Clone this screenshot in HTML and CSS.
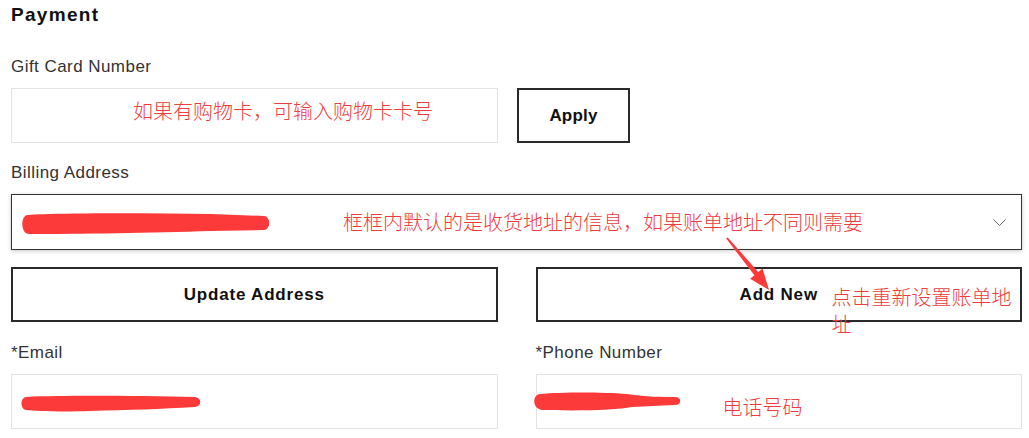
FILE: index.html
```html
<!DOCTYPE html>
<html lang="zh-CN">
<head>
<meta charset="utf-8">
<title>Payment</title>
<link rel="stylesheet" href="styles.css">
</head>
<body>
<div class="page">
  <h2 class="title">Payment</h2>

  <div class="group group-gift">
    <div class="label">Gift Card Number</div>
    <div class="gift-row">
      <div class="input gift-input">
        <span class="note">如果有购物卡，可输入购物卡卡号</span>
      </div>
      <button class="btn btn-apply">Apply</button>
    </div>
  </div>

  <div class="group group-billing">
    <div class="label">Billing Address</div>
    <div class="select">
      <svg class="scribble" width="250" height="22" viewBox="0 0 250 22"><path d="M6,2 C40,0 120,0 190,1 L243,3 C250,4 250,16 243,17 L190,18 C130,20 60,21 8,21 C0,21 -1,4 6,2 Z" fill="#fd3a3a"/></svg>
      <span class="note note-billing">框框内默认的是收货地址的信息，如果账单地址不同则需要</span>
      <svg class="chevron" width="13" height="7" viewBox="0 0 13 7"><polyline points="0.5,0.5 6.5,6.5 12.5,0.5" fill="none" stroke="#666" stroke-width="1"/></svg>
    </div>
  </div>

  <div class="two-col btn-row">
    <button class="btn">Update Address</button>
    <div class="btn-wrap">
      <button class="btn">Add New</button>
      <span class="note note-add">点击重新设置账单地址</span>
    </div>
  </div>

  <div class="two-col contact-row">
    <div class="group">
      <div class="label">*Email</div>
      <div class="input email-input">
        <svg class="scribble" width="181" height="17" viewBox="0 0 181 17"><path d="M6,2 C50,0 120,1 175,2 C182,3 182,11 175,12 C140,14 110,15 70,16 C40,17 15,16 6,15 C0,14 0,3 6,2 Z" fill="#fd3a3a"/></svg>
      </div>
    </div>
    <div class="group">
      <div class="label">*Phone Number</div>
      <div class="input phone-input">
        <svg class="scribble scribble-phone" width="149" height="19" viewBox="0 0 149 19"><path d="M8,2 C30,0 70,0 95,2 C115,5 130,5 143,5 C150,5 150,13 143,13 C125,14 115,14 100,15 C85,18 50,19 10,18 C0,17 0,3 8,2 Z" fill="#fd3a3a"/></svg>
        <span class="note">电话号码</span>
      </div>
    </div>
  </div>

  <svg class="arrow" width="60" height="62" viewBox="0 0 60 62"><polygon points="6.2,6.6 34.4,43.2 30.1,46.7 49,58 42.5,36.5 38.2,40 7.8,5.4" fill="#fd3a3a"/></svg>
</div>
</body>
</html>
```

FILE: styles.css
```css
html, body {
  margin: 0;
  background: #fff;
}

body {
  font-family: "Liberation Sans", Arial, sans-serif;
  color: #333;
}

.page {
  position: relative;
  width: 1011px;
  padding: 4px 7px 0 11px;
}

.title {
  margin: 0;
  font-size: 19px;
  line-height: 22px;
  font-weight: 700;
  letter-spacing: 1.3px;
  color: #111;
}

.label {
  font-size: 17px;
  line-height: 21px;
  letter-spacing: 0.45px;
  color: #333;
  margin-bottom: 11px;
}

.group-gift {
  margin-top: 30px;
}

.gift-row {
  display: flex;
  gap: 19px;
}

.input {
  box-sizing: border-box;
  height: 55px;
  border: 1px solid #e3e3e3;
  position: relative;
  display: flex;
  align-items: flex-start;
}

.gift-input {
  width: 487px;
  padding: 12px 0 0 121px;
}

.note {
  font-family: "Noto Sans CJK SC", sans-serif;
  font-weight: 300;
  font-size: 20px;
  line-height: 20px;
  color: #f03c3c;
  white-space: nowrap;
}

.btn {
  box-sizing: border-box;
  height: 55px;
  width: 100%;
  border: 2px solid #2a2a2a;
  background: #fff;
  font-family: "Liberation Sans", Arial, sans-serif;
  font-size: 17px;
  font-weight: 700;
  letter-spacing: 0.8px;
  color: #111;
  padding: 0;
}

.btn-apply {
  width: 113px;
  letter-spacing: 0.2px;
}

.group-billing {
  margin-top: 19px;
}

.select {
  box-sizing: border-box;
  height: 56px;
  border: 1px solid #333;
  box-shadow: 0 1px 4px rgba(0, 0, 0, 0.22);
  display: flex;
  align-items: center;
  padding: 0 15px 0 9px;
}

.scribble {
  display: block;
  flex: none;
}

.select .scribble {
  margin-top: 3px;
}

.note-billing {
  margin-left: 72px;
}

.chevron {
  display: block;
  margin-left: auto;
  flex: none;
}

.two-col {
  display: grid;
  grid-template-columns: 1fr 1fr;
  column-gap: 38px;
}

.btn-row {
  margin-top: 17px;
}

.btn-wrap {
  position: relative;
}

.note-add {
  position: absolute;
  left: 296px;
  top: 16px;
  width: 190px;
  line-height: 27px;
  white-space: normal;
}

.contact-row {
  margin-top: 20px;
}

.email-input {
  padding: 20px 0 0 8px;
}

.phone-input {
  padding: 22px 0 0 186px;
}

.scribble-phone {
  position: absolute;
  left: -5px;
  top: 17px;
}

.arrow {
  position: absolute;
  left: 720px;
  top: 232px;
}
```
